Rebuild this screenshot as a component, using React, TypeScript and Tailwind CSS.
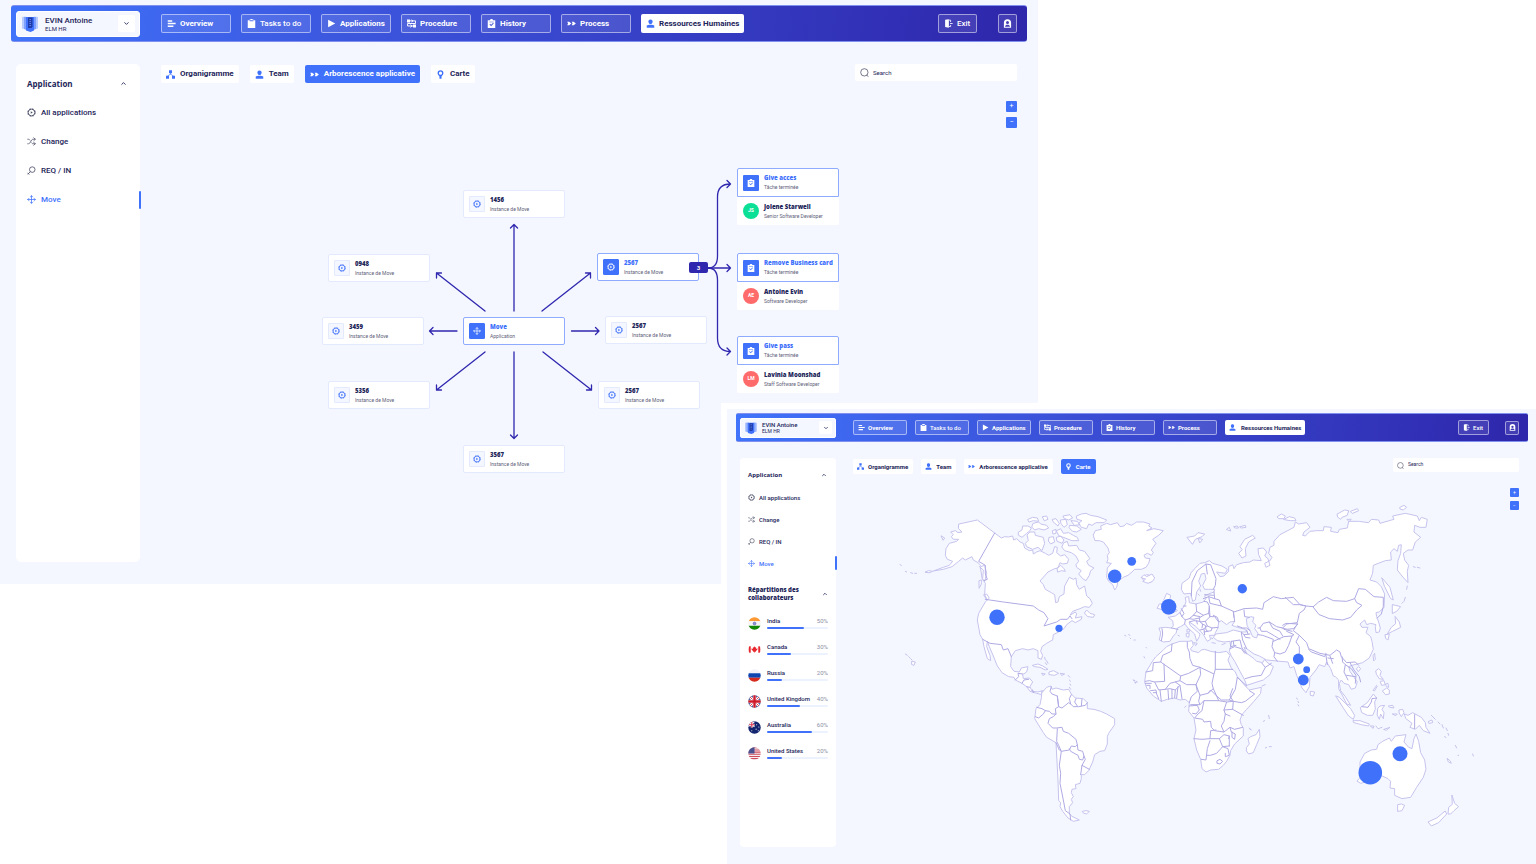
import React from 'react';
import clsx from 'clsx';
import { ChevronDown, ChevronUp, Move, Shuffle } from 'lucide-react';

type Size = 'lg' | 'sm';

type IconProps = { className?: string };

/* ---------- sizes ---------- */

const sizes = {
  lg: {
    panel: 'pt-[5px] px-[11px] pb-[22px]',
    bar: 'h-[37px] pl-[5px] pr-[10px] rounded-[3px]',
    profile: 'w-[124px] h-[26px] pl-[5px] pr-[4px] gap-[7px] rounded-[3px]',
    logo: 'size-4',
    name: 'text-[8px] leading-[9px]',
    role: 'text-[6px] leading-[7px]',
    chevronBox: 'size-[17px]',
    chevron: 'size-[7px]',
    nav: 'ml-[21px] gap-[10px]',
    navItem: 'h-[19px] w-[70px] px-[5px] gap-[4px] text-[8px] rounded-[2px]',
    navActive: 'h-[19px] px-[5px] gap-[4px] text-[8px] rounded-[2px]',
    icon: 'size-[9px]',
    actions: 'gap-[21px]',
    exit: 'h-[19px] w-[39px] px-[5px] gap-[4px] text-[8px] rounded-[2px]',
    account: 'size-[19px] rounded-[2px]',
    body: 'mt-[22px] pl-[5px] pr-[10px] gap-[21px]',
    aside: 'w-[124px] min-h-[498px] pt-[5px] rounded-[5px]',
    heading: 'h-[29px] pl-[11px] pr-[13px] text-[8px]',
    link: 'h-[29px] pl-[11px] gap-[5px] text-[8px]',
    marker: 'h-[18px] w-[2px]',
    head: 'h-[20px]',
    tabs: 'pt-[1px] gap-[11px]',
    tab: 'h-[18px] px-[5px] gap-[5px] text-[8px] rounded-[2px]',
    search: 'h-[17px] w-[162px] pl-[5px] gap-[4px] text-[6px] rounded-[2px]',
    zoom: 'top-[17px] gap-[5px]',
    zoomButton: 'size-[11px] text-[7px]',
  },
  sm: {
    panel: 'pt-[4px] pl-[9px] pr-[8px] pb-[17px]',
    bar: 'h-[29px] pl-[4px] pr-[9px] rounded-[2px]',
    profile: 'w-[96px] h-[20px] pl-[4px] pr-[3px] gap-[5px] rounded-[2px]',
    logo: 'size-[12px]',
    name: 'text-[6px] leading-[7px]',
    role: 'text-[5px] leading-[6px]',
    chevronBox: 'size-[13px]',
    chevron: 'size-[6px]',
    nav: 'ml-[17px] gap-[8px]',
    navItem: 'h-[15px] w-[54px] px-[4px] gap-[3px] text-[6px] rounded-[2px]',
    navActive: 'h-[15px] px-[4px] gap-[5px] text-[6px] rounded-[2px]',
    icon: 'size-[7px]',
    actions: 'gap-[16px]',
    exit: 'h-[15px] w-[31px] px-[4px] gap-[3px] text-[6px] rounded-[2px]',
    account: 'size-[14px] rounded-[2px]',
    body: 'mt-[16px] pl-[4px] pr-[9px] gap-[17px]',
    aside: 'w-[96px] min-h-[389px] pt-[6px] rounded-[4px]',
    heading: 'h-[22px] pl-[8px] pr-[9px] text-[6px]',
    link: 'h-[22px] pl-[8px] gap-[4px] text-[6px]',
    marker: 'h-[14px] w-[2px]',
    head: 'h-[16px]',
    tabs: 'pt-[1px] gap-[8px]',
    tab: 'h-[15px] pl-[4px] pr-[5px] gap-[4px] text-[6px] rounded-[2px]',
    search: 'h-[14px] w-[126px] pl-[4px] gap-[4px] text-[5px] rounded-[2px]',
    zoom: 'top-[14px] gap-[4px]',
    zoomButton: 'size-[9px] text-[5px]',
  },
};

/* ---------- icons ---------- */

const Svg: React.FC<{ className?: string; children: React.ReactNode }> = ({ className, children }) => (
  <svg viewBox="0 0 12 12" className={clsx('shrink-0', className)} fill="currentColor" aria-hidden="true">
    {children}
  </svg>
);

const OverviewIcon = ({ className }: IconProps) => (
  <Svg className={className}>
    <path d="M1 1.500h6v2H1zM1 5h10.500v2H1zM1 8.500h7.500v2H1z" />
  </Svg>
);

const ClipboardIcon = ({ className }: IconProps) => (
  <Svg className={className}>
    <path d="M1 1.500h2.500V.5h1.300V0h2.400v.5h1.300v1H11V12H1zM3.500 1.500V3h5V1.500z" fillRule="evenodd" />
  </Svg>
);

const ClipboardCheckIcon = ({ className }: IconProps) => (
  <Svg className={className}>
    <path
      d="M1 1.500h3C4 .6 5 0 6 0s2 .6 2 1.500h3V12H1zM3 3.500v.8h6v-.8zM3.300 7.300l2.200 2.200L9 6l-.9-.9-2.600 2.600-1.300-1.300z"
      fillRule="evenodd"
    />
  </Svg>
);

const PlayIcon = ({ className }: IconProps) => (
  <Svg className={className}>
    <path d="M1.500 1l9.500 5-9.500 5z" />
  </Svg>
);

const ProcedureIcon = ({ className }: IconProps) => (
  <Svg className={className}>
    <path d="M0 .8h4v4H0zM8 7.200h4v4H8z" />
    <path d="M4 2.500h7.400v3.500H.8v3.300H8M6 1l2 1.500-2 1.500M4.500 7.500l2.200 1.800-2.200 1.700" fill="none" stroke="currentColor" strokeWidth="1.300" />
  </Svg>
);

const ForwardIcon = ({ className }: IconProps) => (
  <Svg className={className}>
    <path d="M.3 3.700h2.600L5.800 6 2.900 8.300H.3L1.400 6zM6.300 3.700h2.600L11.800 6 8.900 8.300H6.300L7.400 6z" />
  </Svg>
);

const UserIcon = ({ className }: IconProps) => (
  <Svg className={className}>
    <path d="M6 .5c1.700 0 2.800 1.100 2.800 2.800S7.700 6.800 6 6.800 3.200 5 3.200 3.300 4.300.5 6 .5z" />
    <path d="M1 8.800c1-1 2.500-1.300 5-1.300s4 .3 5 1.300v2.700H1z" />
  </Svg>
);

const OrgIcon = ({ className }: IconProps) => (
  <Svg className={className}>
    <path d="M4 .3h4v4H4zM0 7.700h4v4H0zM8 7.700h4v4H8z" />
    <path d="M6 4v1.800M2 8l4-2.500L10 8" fill="none" stroke="currentColor" strokeWidth=".9" />
  </Svg>
);

const PinIcon = ({ className }: IconProps) => (
  <Svg className={className}>
    <path
      d="M6 .3a3.900 3.900 0 0 1 3.900 4c0 2-1.700 3-2.500 4.500V11.700H4.600V8.800C3.800 7.300 2.100 6.300 2.100 4.300A3.900 3.900 0 0 1 6 .3zm0 1.800a2.100 2.100 0 1 0 0 4.200 2.100 2.100 0 0 0 0-4.200z"
      fillRule="evenodd"
    />
  </Svg>
);

const ExitIcon = ({ className }: IconProps) => (
  <Svg className={className}>
    <path d="M1.500 1L6.500.2v11.600l-5-1.300z" />
    <path d="M6.500 1.500h2.300v2.500M6.500 10h2.300V8M8 6h3.500" fill="none" stroke="currentColor" strokeWidth="1.100" />
  </Svg>
);

const AccountIcon = ({ className }: IconProps) => (
  <Svg className={className}>
    <path
      d="M1.200 5a4.800 4.800 0 0 1 9.600 0v6.500H1.200zM6 2.800a2 2 0 1 0 0 4 2 2 0 0 0 0-4zM2.600 10.400h6.800C9 8.600 7.600 7.800 6 7.800s-3 .8-3.400 2.600z"
      fillRule="evenodd"
    />
  </Svg>
);

const AppsIcon = ({ className }: IconProps) => (
  <Svg className={className}>
    <circle cx="6" cy="6" r="4.400" fill="none" stroke="currentColor" strokeWidth="1.200" />
    <circle cx="6" cy="6" r="5.100" fill="none" stroke="currentColor" strokeWidth="1" strokeDasharray="2.500 1.505" />
    <path d="M5 4.200L7.700 6 5 7.800z" />
  </Svg>
);

const RequestIcon = ({ className }: IconProps) => (
  <Svg className={className}>
    <circle cx="7" cy="4.800" r="3.700" fill="none" stroke="currentColor" strokeWidth="1.100" />
    <path d="M4.500 7.500L1 11M.5 9l2.500 2.500" fill="none" stroke="currentColor" strokeWidth="1.100" />
  </Svg>
);

const LensIcon = ({ className }: IconProps) => (
  <Svg className={className}>
    <circle cx="5.800" cy="5.800" r="4.900" fill="none" stroke="currentColor" strokeWidth="1" />
    <path d="M8.800 9.600l2.500 1.800" fill="none" stroke="currentColor" strokeWidth="1" />
  </Svg>
);

const Logo = ({ className }: IconProps) => (
  <svg viewBox="0 0 16 16" className={clsx('shrink-0', className)} aria-hidden="true">
    <path d="M0 1l4-.5v13L0 12.500zM16 1l-4-.5v13l4-1z" fill="#b7cbff" />
    <path d="M2 1h3v13l-3-1zM14 1h-3v13l3-1z" fill="#7ea0ff" />
    <path d="M4 1h8v13.500L8.500 16 4 14.500z" fill="#3f71fb" />
    <path d="M6 1.500h4.500v9L9.500 12H6z" fill="#1d3aa8" />
    <path d="M7.500 3h1.300v1H7.500zM7.500 5h1.300v1H7.500zM7.500 7h1.300v1H7.500zM7.500 9h1.300v1H7.500z" fill="#6f92f5" />
  </svg>
);

/* ---------- shell ---------- */

const navItems = [
  { label: 'Overview', icon: OverviewIcon },
  { label: 'Tasks to do', icon: ClipboardIcon },
  { label: 'Applications', icon: PlayIcon },
  { label: 'Procedure', icon: ProcedureIcon },
  { label: 'History', icon: ClipboardCheckIcon },
  { label: 'Process', icon: ForwardIcon },
];

const sideLinks = [
  { label: 'All applications', icon: AppsIcon },
  { label: 'Change', icon: Shuffle },
  { label: 'REQ / IN', icon: RequestIcon },
  { label: 'Move', icon: Move },
];

const tabs = [
  { label: 'Organigramme', icon: OrgIcon },
  { label: 'Team', icon: UserIcon },
  { label: 'Arborescence applicative', icon: ForwardIcon },
  { label: 'Carte', icon: PinIcon },
];

const TopBar: React.FC<{ size: Size }> = ({ size }) => {
  const s = sizes[size];
  return (
    <header className={clsx('flex items-center border-y border-[#7f90ee] bg-[linear-gradient(97deg,#4073fb,#3a4fd6_42%,#2e26ab)] text-white', s.bar)}>
      <button className={clsx('flex items-center border border-white bg-[#f4f7ff] text-left text-[#1d2559]', s.profile)}>
        <Logo className={s.logo} />
        <span className="flex-1">
          <span className={clsx('block font-medium', s.name)}>EVIN Antoine</span>
          <span className={clsx('block', s.role)}>ELM HR</span>
        </span>
        <span className={clsx('flex items-center justify-center rounded-[2px] bg-white', s.chevronBox)}>
          <ChevronDown className={s.chevron} strokeWidth={3} />
        </span>
      </button>
      <nav className={clsx('flex flex-1 items-center', s.nav)}>
        {navItems.map(({ label, icon: Icon }) => (
          <button
            key={label}
            className={clsx(
              'flex items-center whitespace-nowrap border border-white/50 bg-white/10',
              label === 'Tasks to do' ? 'font-medium' : 'font-bold',
              s.navItem,
            )}
          >
            <Icon className={s.icon} />
            {label}
          </button>
        ))}
        <button className={clsx('flex items-center whitespace-nowrap bg-white font-bold text-[#1d2559]', s.navActive)}>
          <UserIcon className={clsx('text-[#3f71fb]', s.icon)} />
          Ressources Humaines
        </button>
      </nav>
      <div className={clsx('flex items-center', s.actions)}>
        <button className={clsx('flex items-center border border-white/50 bg-white/10 font-medium', s.exit)}>
          <ExitIcon className={s.icon} />
          Exit
        </button>
        <button aria-label="Account" className={clsx('flex items-center justify-center border border-white/50 bg-white/10', s.account)}>
          <AccountIcon className={s.icon} />
        </button>
      </div>
    </header>
  );
};

const Sidebar: React.FC<{ size: Size; children?: React.ReactNode }> = ({ size, children }) => {
  const s = sizes[size];
  return (
    <aside className={clsx('shrink-0 bg-white text-[#1d2559]', s.aside)}>
      <h2 className={clsx("flex items-center justify-between font-['Open_Sans',sans-serif] font-bold", s.heading)}>
        Application
        <ChevronUp className={s.chevron} strokeWidth={3} />
      </h2>
      {sideLinks.map(({ label, icon: Icon }) => {
        const active = label === 'Move';
        return (
          <a
            key={label}
            href="#"
            className={clsx('relative flex items-center font-medium', active ? 'text-[#3f71fb]' : 'text-[#1d2559]', s.link)}
          >
            <Icon className={clsx('shrink-0', !active && 'text-[#4b4f68]', s.icon)} />
            {label}
            {active && <span className={clsx('absolute -right-px rounded-full bg-[#3f71fb]', s.marker)} />}
          </a>
        );
      })}
      {children}
    </aside>
  );
};

interface ScreenProps {
  size: Size;
  tab: string;
  side?: React.ReactNode;
  children: React.ReactNode;
}

const Screen: React.FC<ScreenProps> = ({ size, tab, side, children }) => {
  const s = sizes[size];
  return (
    <section className={clsx('bg-[#f4f7ff]', s.panel)}>
      <TopBar size={size} />
      <div className={clsx('flex', s.body)}>
        <Sidebar size={size}>{side}</Sidebar>
        <main className="min-w-0 flex-1">
          <div className={clsx('flex items-start justify-between', s.head)}>
            <div className={clsx('flex', s.tabs)}>
              {tabs.map(({ label, icon: Icon }) => {
                const active = label === tab;
                return (
                  <button
                    key={label}
                    className={clsx(
                      'flex items-center whitespace-nowrap font-bold',
                      active ? 'bg-[#3f71fb] text-white' : 'bg-white text-[#1d2559]',
                      s.tab,
                    )}
                  >
                    <Icon className={clsx(!active && 'text-[#3f71fb]', s.icon)} />
                    {label}
                  </button>
                );
              })}
            </div>
            <label className={clsx('flex items-center bg-white text-[#4b4f68]', s.search)}>
              <LensIcon className={s.icon} />
              <input
                type="search"
                aria-label="Search"
                placeholder="Search"
                className="min-w-0 flex-1 bg-transparent outline-none placeholder:text-[#1d2559]"
              />
            </label>
          </div>
          <div className="relative">
            {children}
            <div className={clsx('absolute right-0 flex flex-col', s.zoom)}>
              <button aria-label="Zoom in" className={clsx('flex items-center justify-center rounded-[1px] bg-[#3f71fb] text-white', s.zoomButton)}>
                +
              </button>
              <button aria-label="Zoom out" className={clsx('flex items-center justify-center rounded-[1px] bg-[#3f71fb] text-white', s.zoomButton)}>
                −
              </button>
            </div>
          </div>
        </main>
      </div>
    </section>
  );
};

/* ---------- application tree ---------- */

const nodes = [
  { x: 302, y: 106, title: '1456', sub: 'Instance de Move' },
  { x: 167, y: 170, title: '0948', sub: 'Instance de Move' },
  { x: 161, y: 233, title: '3459', sub: 'Instance de Move' },
  { x: 167, y: 297, title: '5356', sub: 'Instance de Move' },
  { x: 302, y: 361, title: '3567', sub: 'Instance de Move' },
  { x: 302, y: 233, title: 'Move', sub: 'Application', active: true, icon: Move },
  { x: 436, y: 169, title: '2567', sub: 'Instance de Move', active: true },
  { x: 444, y: 232, title: '2567', sub: 'Instance de Move' },
  { x: 437, y: 297, title: '2567', sub: 'Instance de Move' },
];

const tasks = [
  { y: 84, title: 'Give acces', initials: 'JS', color: 'bg-[#0be096]', name: 'Jolene Starwell', job: 'Senior Software Developer' },
  { y: 169, title: 'Remove Business card', initials: 'AE', color: 'bg-[#ff6b6b]', name: 'Antoine Evin', job: 'Software Developer' },
  { y: 252, title: 'Give pass', initials: 'LM', color: 'bg-[#ff6b6b]', name: 'Lavinia Moonshad', job: 'Staff Software Developer' },
];

const CardText: React.FC<{ title: string; sub: string; active?: boolean }> = ({ title, sub, active }) => (
  <span className="whitespace-nowrap">
    <span
      className={clsx(
        "block font-['Open_Sans',sans-serif] text-[6px] leading-[10px] font-extrabold",
        active ? 'text-[#3f71fb]' : 'text-[#1d2559]',
      )}
    >
      {title}
    </span>
    <span className="block text-[5px] leading-[9px] text-[#5d6078]">{sub}</span>
  </span>
);

const Tree = () => (
  <div className="relative h-[478px]">
    <svg className="absolute top-0 left-0" width="856" height="478" fill="none" stroke="#2f27ae" strokeWidth="1.300" strokeLinecap="round" strokeLinejoin="round" aria-hidden="true">
      <path d="M353 227V141M349.500 144l3.500-3.500 3.500 3.500" />
      <path d="M353 268v86M349.500 351l3.500 3.500 3.500-3.500" />
      <path d="M324 227l-48.500-38M275.500 194v-5h5" />
      <path d="M381 227l48.500-38M424.500 189h5v5" />
      <path d="M296 247h-27M272 243.500l-3.500 3.500 3.500 3.500" />
      <path d="M410.500 247h27M434.500 243.500l3.500 3.500-3.500 3.500" />
      <path d="M324 268l-48.500 38M275.500 301v5h5" />
      <path d="M382 268l48.500 38M425.500 306h5v-5" />
      <path d="M547 184h22.500M566 180.500l3.500 3.500-3.500 3.500" />
      <path d="M547 184q9.500 0 9.500-12v-59q0-13 13-13M566 96.500l3.500 3.500-3.500 3.500" />
      <path d="M547 184q9.500 0 9.500 12v58q0 13.500 13 13.500M566 264l3.500 3.500-3.500 3.500" />
    </svg>
    {nodes.map(({ x, y, title, sub, active, icon }) => {
      const Icon = icon ?? AppsIcon;
      return (
        <div
          key={x + '-' + y}
          style={{ left: x, top: y }}
          className={clsx(
            'absolute flex h-[28px] w-[102px] items-center gap-[5px] rounded-[2px] border bg-white pl-[5px]',
            active ? 'border-[#8fabff]' : 'border-[#e3eafd]',
          )}
        >
          <span
            className={clsx(
              'flex size-[16px] items-center justify-center rounded-[1px] border',
              active ? 'border-[#3f71fb] bg-[#3f71fb] text-white' : 'border-[#e3eafd] bg-[#f4f7ff] text-[#3f71fb]',
            )}
          >
            <Icon className="size-[8px]" />
          </span>
          <CardText title={title} sub={sub} active={active} />
        </div>
      );
    })}
    <span className="absolute top-[178px] left-[528px] flex h-[11px] w-[19px] items-center justify-center rounded-[2px] bg-[#2f27ae] text-[6px] font-bold text-white">
      3
    </span>
    {tasks.map((task) => (
      <div key={task.title} style={{ top: task.y }} className="absolute left-[576px] w-[102px] rounded-[2px] bg-white">
        <div className="flex h-[29px] items-center gap-[5px] rounded-t-[2px] border border-[#8fabff] pl-[5px]">
          <span className="flex size-[16px] shrink-0 items-center justify-center rounded-[1px] bg-[#3f71fb] text-white">
            <ClipboardCheckIcon className="size-[8px]" />
          </span>
          <CardText title={task.title} sub="Tâche terminée" active />
        </div>
        <div className="flex h-[28px] items-center gap-[5px] pl-[6px]">
          <span className={clsx('flex size-[16px] items-center justify-center rounded-full text-[5px] font-bold text-white', task.color)}>
            {task.initials}
          </span>
          <CardText title={task.name} sub={task.job} />
        </div>
      </div>
    ))}
  </div>
);

/* ---------- flags ---------- */

const stars = [[16, 7], [20, 11], [15, 15], [19, 18], [7, 18]];

const flags: Record<string, React.ReactNode> = {
  India: (
    <>
      <path d="M0 0h24v8H0z" fill="#ff9933" />
      <path d="M0 8h24v8H0z" fill="#f4f4f8" />
      <path d="M0 16h24v8H0z" fill="#138808" />
      <circle cx="12" cy="12" r="2.500" fill="#8f92d6" stroke="#4448a8" strokeWidth="1" />
    </>
  ),
  Canada: (
    <>
      <path d="M0 0h24v24H0z" fill="#fff" />
      <path d="M1 6h4v12H1zM19 6h4v12h-4z" fill="#e8262d" />
      <path d="M12 6l1.500 2.500 1.500-.5-.3 3 2.300-1.500.8 2-3.300 3.500.2 1h-2.200V18h-1v-2H9.300l.2-1L6.200 11.500l.8-2L9.300 11 9 8l1.500.5z" fill="#e8262d" />
    </>
  ),
  Russia: (
    <>
      <path d="M0 0h24v8H0z" fill="#f1f2f7" />
      <path d="M0 8h24v8H0z" fill="#0c45b0" />
      <path d="M0 16h24v8H0z" fill="#d52b1e" />
    </>
  ),
  'United Kingdom': (
    <>
      <path d="M0 0h24v24H0z" fill="#1b2a78" />
      <path d="M0 0l24 24M24 0L0 24" stroke="#fff" strokeWidth="5" />
      <path d="M0 0l24 24M24 0L0 24" stroke="#cf1b2b" strokeWidth="1.500" />
      <path d="M12 0v24M0 12h24" stroke="#fff" strokeWidth="6.500" />
      <path d="M12 0v24M0 12h24" stroke="#cf1b2b" strokeWidth="4.500" />
    </>
  ),
  Australia: (
    <>
      <path d="M0 0h24v24H0z" fill="#12256e" />
      <path d="M0 1l12 10M12 1L0 11" stroke="#fff" strokeWidth="2" />
      <path d="M7 0v12M0 7h12" stroke="#fff" strokeWidth="4" />
      <path d="M7 0v12M0 7h12" stroke="#d8324b" strokeWidth="2" />
      {stars.map(([x, y]) => (
        <circle key={x} cx={x} cy={y} r="1" fill="#fff" />
      ))}
    </>
  ),
  'United States': (
    <>
      <path d="M0 0h24v24H0z" fill="#f6eef2" />
      <path d="M0 1.500h24M0 5.500h24M0 9.500h24M0 13.500h24M0 17.500h24M0 21.500h24" stroke="#cf4c5c" strokeWidth="2" />
      <path d="M0 0h12v12H0z" fill="#4a5190" />
    </>
  ),
};

const Flag: React.FC<{ country: string }> = ({ country }) => {
  const id = 'flag-' + country.toLowerCase().replace(' ', '-');
  return (
    <svg viewBox="0 0 24 24" className="size-[13px] shrink-0" role="img" aria-label={country}>
      <clipPath id={id}>
        <circle cx="12" cy="12" r="11.500" />
      </clipPath>
      <g clipPath={'url(#' + id + ')'}>{flags[country]}</g>
    </svg>
  );
};

const shares = [
  { country: 'India', label: '50%', fill: 60 },
  { country: 'Canada', label: '30%', fill: 40 },
  { country: 'Russia', label: '20%', fill: 24 },
  { country: 'United Kingdom', label: '40%', fill: 54 },
  { country: 'Australia', label: '60%', fill: 74 },
  { country: 'United States', label: '20%', fill: 24 },
];

const Shares = () => (
  <div className="mt-3 pr-[8px] pl-[8px]">
    <h2 className="flex items-center justify-between font-['Open_Sans',sans-serif] text-[6px] leading-[8px] font-extrabold">
      <span>
        Répartitions des
        <br />
        collaborateurs
      </span>
      <ChevronUp className="size-[6px]" strokeWidth={3} />
    </h2>
    <ul className="mt-[8px]">
      {shares.map(({ country, label, fill }) => (
        <li key={country} className="flex h-[26px] items-center gap-[6px]">
          <Flag country={country} />
          <div className="flex-1">
            <div className="flex justify-between text-[6px] leading-[8px] whitespace-nowrap">
              <span className="font-medium">{country}</span>
              <span className="text-[#8c8fa6]">{label}</span>
            </div>
            <div className="mt-[2px] h-[2px] rounded-full bg-[#edf2ff]">
              <div className="h-full rounded-full bg-[#3f71fb]" style={{ width: fill + '%' }} />
            </div>
          </div>
        </li>
      ))}
    </ul>
  </div>
);

/* ---------- world map ---------- */

// every region is drawn on its own origin, three units to a pixel
const regions = [
  {
    name: 'north-america',
    at: 'translate(37 26) scale(.3333)',
    coast: [
      'M207 72L262 60L314 99L326 108L334 114L344 110L356 111L368 108L371 120L380 116L390 126L400 130L404 144L418 152L428 150L430 162L440 156L450 152L466 160L476 166L488 160L494 140L502 142L500 158L512 168L524 164L536 178L532 190L518 192L510 188L504 204L494 206L474 216L450 243L460 254L466 268L484 278L494 284L497 308L504 306L508 290L522 282L524 258L538 232L550 238L558 234L560 254L568 268L584 258L590 288L600 296L607 310L598 322L584 320L570 326L548 334L540 346L556 336L560 342L556 354L576 350L574 358L556 368L546 362L530 374L522 386L506 396L490 404L488 420L470 430L456 440L452 454L458 466L454 478L444 474L444 452L430 446L414 450L398 446L376 452L364 470L362 500L372 514L388 516L394 504L414 500L410 516L398 524L400 536L418 534L428 546L420 560L426 574L444 576L458 572L470 576L456 584L440 580L420 574L410 560L396 550L376 540L372 532L356 530L336 518L322 498L310 468L298 440L292 424L290 440L300 466L302 482L292 476L282 440L278 418L270 404L262 360L266 340L286 306L292 300L284 284L286 250L278 236L280 210L268 200L272 196L264 188L250 180L246 170L226 180L218 174L206 184L186 200L160 208L130 213L160 202L178 196L188 184L172 178L166 166L168 146L178 130L200 124L206 118L190 118L184 110L190 104L182 96L196 92L204 98L216 96L206 86Z',
      'M522 128L532 124L536 138L560 136L568 150L584 154L600 176L590 184L596 196L612 204L602 212L598 226L588 242L578 236L566 222L574 212L560 202L558 194L566 184L558 168L544 158L524 152L516 142Z',
      'M412 104L420 96L434 96L436 106L460 112L464 130L456 152L444 142L428 148L410 140L406 130L414 122Z',
      'M386 96L396 90L398 78L414 78L424 84L420 92L410 100L396 112L386 106Z',
      'M430 70L446 66L452 72L470 76L476 84L462 90L446 86L434 90L426 82Z',
      'M414 58L428 52L442 54L446 64L430 62L418 66Z',
      'M458 50L470 48L474 58L464 62Z',
      'M478 112L490 110L494 126L482 132L476 124Z',
      'M500 92L512 86L520 100L536 98L550 106L562 112L566 122L546 122L520 112L508 108Z',
      'M500 112L512 108L522 120L516 130L502 124Z',
      'M488 58L498 56L508 70L504 78L490 66Z',
      'M512 60L528 58L532 74L522 82L514 72Z',
      'M488 92L498 88L498 100L490 102Z',
      'M520 48L540 44L548 54L536 60L524 56Z',
      'M540 76L560 78L574 88L560 96L548 94L538 84Z',
      'M544 62L562 64L570 74L554 76Z',
      'M560 48L574 42L588 40L602 46L624 50L650 60L642 68L618 68L606 76L596 72L590 86L574 82L566 70L576 62L562 58Z',
      'M502 204L512 196L522 206L526 214L514 212L504 216Z',
      'M584 338L590 330L600 340L614 344L610 352L594 350Z',
      'M282 284L290 282L298 294L292 300Z',
      'M268 242L274 240L274 252L268 264Z',
      'M272 200L284 196L290 220L284 244L278 240Z',
      'M154 108L164 114L160 120Z',
      'M106 216L116 212L128 214L118 218Z',
      'M66 484L76 486L72 496L66 494Z',
      'M46 462L52 466M56 470L60 474M62 476L66 480M30 194L34 196M46 214L50 216M62 218L68 220M74 220L80 220',
      'M428 496L444 492L458 498L474 508L466 510L450 502L434 500Z',
      'M478 516L490 512L506 520L494 526L478 524Z',
      'M456 520L466 522L460 526Z',
      'M512 520L524 522L516 526Z',
      'M464 472L466 480M470 482L474 490M466 488L470 494M534 526L540 532M538 540L542 544M540 552L542 556M538 562L542 568',
      'M704 406L708 408M716 404L720 406M720 414L722 416M732 420L736 420M768 442L770 444M762 470L764 474M730 540L734 544M736 548L740 546',
      'M756 232L770 224L790 228L784 246L764 244Z',
    ],
    borders: [
      'M314 99L266 184L286 196L286 222L292 238L282 242',
      'M286 298L340 306L430 318L446 330L462 338L474 356L462 378L500 366L512 358L532 358L540 348L546 356',
      'M278 418L300 430L334 434L340 450L354 446L364 470',
      'M376 540L386 530L384 520L398 522M396 550L402 540L416 538M410 560L418 562M430 578L428 570M456 600L456 574',
    ],
  },
  {
    name: 'greenland',
    at: 'translate(247 26) scale(.3333)',
    coast: [
      'M-20 104L-14 92L4 88L2 78L20 70L32 74L52 68L60 80L72 78L80 70L94 76L104 70L110 66L130 66L150 72L146 78L156 84L140 92L162 86L190 92L176 106L158 118L168 130L154 150L160 158L154 166L142 160L132 166L136 174L150 176L146 190L138 202L124 208L104 208L96 216L84 226L70 232L54 244L50 262L44 270L38 254L26 244L20 232L22 204L34 190L20 188L24 178L22 166L28 158L24 144L10 126L-2 122L-14 122Z',
      'M124 232L132 224L140 230L156 222L164 234L158 244L144 250L128 244L136 238Z',
    ],
    borders: [],
  },
  {
    name: 'south-america',
    at: 'translate(147 166) scale(.3333)',
    coast: [
      'M126 158L140 142L152 138L156 148L168 144L190 150L206 148L214 162L226 174L250 176L262 188L262 206L282 208L302 214L320 222L344 236L344 254L326 280L322 290L322 312L314 332L300 334L284 344L278 366L266 392L254 404L244 404L244 416L240 430L226 434L228 446L216 448L214 458L220 470L214 478L218 488L208 500L208 520L214 528L238 540L220 544L204 534L188 514L180 500L182 488L176 482L174 420L168 308L140 292L130 278L104 236L108 206L120 194L124 174Z',
      'M248 514L258 512L268 514L260 522L252 520Z',
    ],
    borders: [
      'M154 140L150 154L156 162L172 168L176 200L166 206L168 222L160 230L148 236L144 250L158 264L170 264L186 262L190 274L206 280L228 298L232 314L226 320L214 318L208 330L184 334L176 316L170 304L172 266',
      'M110 202L126 206L136 212L130 222L116 234L106 230M136 212L148 214L156 222L168 222',
      'M172 168L176 200L186 204L196 196L206 188L212 192L208 176L214 164M212 192L220 200L236 200L256 196L262 188M228 176L224 186L232 198M246 178L244 198',
      'M232 314L234 330L248 334L252 348L248 360L238 358L234 346L212 334L208 326M252 348L256 358L246 376L268 388M246 376L242 404',
      'M168 308L178 330L184 334L178 376L182 400L180 430L190 480L196 512L210 522L212 540',
    ],
  },
  {
    name: 'eurasia',
    at: 'translate(247 26) scale(.3333)',
    coast: [
      'M178 384L196 382L214 384L220 378L218 362L204 352L216 350L226 348L240 338L246 328L254 316L258 306L256 292L266 290L268 308L288 312L310 306L318 296L314 288L326 282L342 276L344 268L326 268L314 268L308 256L318 236L314 220L304 222L296 244L302 258L290 276L286 300L278 304L272 280L252 282L244 268L246 250L268 234L272 220L284 206L300 190L314 188L328 182L338 190L366 198L382 208L376 220L350 216L360 230L372 228L386 214L386 200L398 194L402 206L410 194L430 188L450 186L460 180L484 182L476 164L474 146L490 144L500 156L494 168L504 176L510 196L498 202L494 190L510 182L516 172L506 160L510 142L522 136L522 124L540 104L582 82L586 66L596 72L620 68L630 82L612 96L608 106L616 108L630 94L650 92L670 92L672 80L694 82L692 94L714 98L718 88L742 84L746 64L776 64L806 68L814 58L836 60L840 70L882 58L878 48L916 40L952 48L958 62L964 52L982 58L978 82L960 82L944 76L942 96L962 112L946 126L938 150L924 150L910 160L914 180L926 196L922 214L924 248L906 228L892 210L894 182L902 160L904 134L896 136L892 154L882 146L872 156L874 180L856 182L820 196L818 220L810 240L830 246L844 260L854 282L852 322L838 336L828 338L830 350L836 366L841 384L838 396L828 398L826 380L828 374L812 370L800 374L794 360L780 372L786 382L804 382L798 398L812 410L816 424L820 448L808 474L788 488L756 496L746 500L750 514L762 532L772 546L766 564L754 568L746 554L732 550L724 540L718 550L722 572L736 590L752 616L740 612L728 588L716 566L716 540L706 530L700 528L692 506L680 486L674 500L658 494L648 510L630 532L628 560L618 578L606 564L590 526L582 500L570 504L564 486L540 484L500 480L478 468L462 462L440 446L432 442L440 460L462 476L470 484L488 488L494 478L500 486L520 500L510 524L490 540L440 556L434 540L420 514L404 484L394 468L388 454L392 440L390 424L372 426L352 422L340 412L348 402L380 398L400 390L424 396L440 396L436 388L412 382L396 376L404 364L390 366L380 374L364 362L356 366L354 384L346 398L344 406L328 406L332 418L322 424L310 404L302 394L286 378L268 366L270 376L300 402L298 410L290 424L284 402L266 386L254 372L242 380L232 384L228 400L220 408L210 424L190 426L178 420L182 400Z',
      'M192 298L200 280L212 286L210 296L222 320L232 332L206 344L194 340L200 320Z',
      'M172 324L178 312L188 312L188 328Z',
      'M426 148L420 140L434 118L458 106L466 114L446 126L436 146L438 168L426 174L416 160L422 154Z',
      'M262 112L284 108L294 98L314 102L306 110L286 118L278 132Z',
      'M296 116L308 118L300 128Z',
      'M380 88L388 82L392 92Z',
      'M402 80L412 78L416 84L406 84ZM420 80L436 76L438 82L424 84Z',
      'M532 50L544 42L556 48L552 56L538 56Z',
      'M552 58L568 50L584 54L588 62L572 62Z',
      'M712 42L734 30L746 32L742 46L726 52L722 58L714 52Z',
      'M752 34L772 26L776 32L758 40Z',
      'M742 58L754 58L748 64Z',
      'M900 22L912 16L920 22L910 30L902 28Z',
      'M846 234L870 262L880 300L872 296L854 260Z',
      'M878 314L902 320L890 334L878 340Z',
      'M886 350L898 366L902 382L878 394L862 402L874 382L886 372Z',
      'M856 404L868 402L864 420L858 416Z',
      'M820 466L824 460L826 478L822 482Z',
      'M770 506L776 500L782 506L776 514Z',
      'M906 310L912 304L916 292M920 268L922 258M940 200L946 202M952 202L960 204',
      'M632 574L644 576L640 588L632 586Z',
      'M262 388L268 388L268 396L262 396ZM260 400L268 400L266 412L260 410Z',
      'M282 428L292 430L288 436Z',
      'M336 428L346 430M366 434L376 430',
      'M234 406L238 408M334 414L338 416',
      'M300 268L302 274M294 282L298 286',
    ],
    borders: [
      'M274 288L276 246L292 212L318 192L322 222M318 192L332 194L348 236L346 256L340 268',
      'M342 276L344 296L358 300L364 318L400 334L402 352',
      'M314 284L340 286M310 296L326 290L344 296M326 290L330 310L364 318',
      'M288 312L290 334L310 346L326 340L328 318L322 306L312 304',
      'M244 326L252 340L246 350L256 360L268 356L280 346L290 334M240 338L246 350M250 318L258 318',
      'M214 384L234 388M186 386L188 402L184 422',
      'M256 360L254 372M268 356L280 358L298 354L310 346M280 346L300 350M268 366L282 362L298 364L308 372L306 384M298 354L300 366L316 364L330 350L326 340',
      'M316 364L322 378L312 386M322 378L336 384L354 382M330 350L344 350L356 366M336 384L334 392L312 396M312 386L314 404M340 346L352 352L356 364',
      'M328 320L330 350M306 372L316 376L318 390L324 394M290 362L292 372M300 390L310 388',
      'M402 336L432 326L470 324L488 328L492 308L520 290L544 296L580 292L600 314L618 318L612 330L598 340L592 368L560 372L548 384L530 380L508 366L490 370L480 384L474 384',
      'M432 330L434 350L448 352M400 334L404 364',
      'M412 378L428 384L440 384L450 392M424 396L432 404L450 402M432 404L436 412L450 414M440 390L444 402',
      'M474 404L488 406L520 418L516 440L524 458L522 470L532 484M424 398L428 420L440 446',
      'M520 424L552 410L576 408L566 436L556 456L540 462L524 458',
      'M480 384L484 394L500 394L524 408L540 418M508 366L518 384L540 394L548 408M552 388L576 394',
      'M548 376L558 370L594 372L580 386L562 388L546 384M560 394L582 404L576 408',
      'M394 424L420 420L426 444L440 462M390 446L404 440L424 446L434 460M394 424L392 440L408 436M400 424L402 438',
      'M436 536L456 530L484 526L496 502L514 490M496 502L486 490',
      'M640 320L656 306L680 292L700 302L740 304L764 296L770 308L786 316L770 330L752 352L728 360L688 356L658 344Z',
      'M764 296L776 266L796 268L822 290L850 292L850 320L844 342L832 354',
      'M556 292L580 314L600 314L618 318L640 320',
      'M598 406L620 428L626 446L660 460L690 466L710 450L720 456L724 470L740 488L766 486L776 496',
      'M592 372L580 392L598 406L588 426L598 440L598 464L584 486',
      'M626 448L634 456L674 470L678 460M678 466L682 494M690 468L698 490M684 474L700 476',
      'M726 470L728 486L736 494L732 516L744 540M736 494L754 506L768 526L766 550M750 488L762 510L778 530L782 546M740 526L766 530',
    ],
  },
  {
    name: 'africa',
    at: 'translate(147 166) scale(.3333)',
    coast: [
      'M490 30L500 20L516 12L540 4L566 4L576 2L580 16L572 26L574 32L596 38L604 30L614 28L632 34L656 38L680 34L690 46L684 60L694 84L706 96L712 110L724 124L736 138L748 150L784 142L782 160L762 184L740 208L726 224L720 240L724 254L730 264L730 288L704 312L692 332L690 346L680 364L670 376L656 388L632 390L618 396L606 386L602 358L590 330L582 296L588 270L582 234L566 214L568 188L556 178L540 180L524 174L502 178L484 184L460 168L440 144L434 126L438 96L456 66L466 52Z',
      'M740 322L748 312L744 296L752 290L768 284L778 268L780 290L770 314L760 338L746 342L740 334Z',
      'M400 120L404 122M404 128L406 130M408 124L412 126M554 202L558 198M748 264L752 268',
    ],
    borders: [
      'M516 12L514 34L488 46L482 66L460 68L458 92L438 96',
      'M482 66L542 108L566 100L600 82L578 76L570 56L568 36L562 22L562 6',
      'M492 72L494 124L464 126L448 122L436 124M542 108L540 122L510 130L496 148L476 150L464 126',
      'M600 82L642 102L646 88L698 88M646 34L646 88M600 82L602 104L588 134L560 134L540 122',
      'M642 102L636 130L640 146L624 160L600 166L594 150L588 134M640 146L650 168L664 180L688 180L706 148L712 112',
      'M588 134L592 154L574 170L568 188M600 166L596 184L600 194L572 194M624 160L632 150L650 168L656 182L612 182L600 194',
      'M496 148L510 146L526 150L540 136L526 126M526 150L524 174M504 150L506 178M480 150L484 184M534 140L530 174M540 136L546 176M516 148L516 176',
      'M440 136L450 136L450 146M452 152L468 150L470 162L476 176M460 158L470 158M436 130L454 130',
      'M612 182L606 212L594 222L584 234L608 238L612 246L632 244L634 262L644 272L672 276L664 258L672 244L676 222L672 210L680 186L656 182M568 198L592 196L598 210L588 222L578 220',
      'M712 112L740 138M688 180L700 184L724 188L736 184L764 162L748 152M698 146L690 168L700 184L698 208L730 226M698 184L680 186M672 210L698 208M676 222L690 228',
      'M582 296L606 298L630 296L632 272L648 270M630 296L658 296L672 284L688 288L686 296M630 302L622 326L618 360L604 358M658 296L668 320L688 318M668 320L650 340L632 346L620 346M668 320L684 326L688 346L676 350L676 340',
      'M672 276L690 262L704 268L728 262M690 262L694 276L706 282L704 298L696 292L696 276M688 288L688 318M652 362L660 358L668 364L660 372L652 370Z',
    ],
  },
  {
    name: 'oceania',
    at: 'translate(377 166) scale(.3333)',
    coast: [
      'M390 412L390 366L404 340L424 330L440 328L444 314L458 304L478 294L484 304L496 288L528 284L522 306L536 322L546 326L552 296L558 282L566 304L572 338L584 360L588 388L580 412L560 442L542 472L516 476L494 466L494 446L480 444L482 424L474 416L452 406L428 412L414 424L392 430L382 424Z',
      'M504 494L514 492L524 496L516 512L504 514Z',
      'M666 466L674 490L686 500L672 512L662 522L654 522L656 502L666 494Z',
      'M646 514L650 522L626 548L604 558L594 546L620 534Z',
      'M524 222L534 226L548 218L574 232L586 248L588 262L600 280L580 272L568 256L556 268L540 262L546 250L528 236Z',
      'M392 202L412 188L430 162L440 174L434 186L436 208L428 226L412 226L396 218Z',
      'M318 168L328 172L346 190L362 206L374 226L370 238L356 228L340 204Z',
      'M370 242L390 242L418 252L416 258L394 254L372 248Z',
      'M444 204L450 198L464 196L456 208L462 218L460 236L452 222L448 238L442 226Z',
      'M438 92L446 86L454 94L450 106L460 118L448 116L440 104Z',
      'M452 124L462 122L466 134L456 136ZM458 152L470 144L478 150L478 162L468 164Z',
      'M468 132L474 130L476 142L470 140Z',
      'M430 150L440 136L442 138L434 152Z',
      'M508 210L518 208L522 218L514 230L508 220Z',
      'M476 198L488 196L492 204L480 202ZM488 222L502 222L498 226Z',
      'M422 258L432 258L430 264ZM438 258L444 266L456 262M462 268L480 262L470 270Z',
      'M596 244L606 240L608 248L598 250ZM604 226L616 238M624 246L630 252M636 254L640 264M648 264L652 272M654 280L656 286M644 290L648 292',
      'M676 316L680 324M684 346L686 346M728 342L730 348M652 356L660 362L664 370L656 366Z',
      'M200 174L202 178M204 184L206 188M204 194L206 198M116 226L118 236M100 244L104 242M106 324L110 322M118 320L124 320M58 266L64 270M96 138L106 134',
    ],
    borders: ['M554 224V266', 'M396 200L414 202L424 186L426 176L440 174'],
  },
];

// office pins: position and radius in map pixels
const pins = [
  { x: 144, y: 143.300, r: 7.700 },
  { x: 206, y: 154.300, r: 3.600 },
  { x: 261.700, y: 102.300, r: 6.700 },
  { x: 278.700, y: 87.300, r: 4.400 },
  { x: 315.700, y: 132.700, r: 7.700 },
  { x: 389.300, y: 114.700, r: 4.700 },
  { x: 445.300, y: 185, r: 5.400 },
  { x: 453.700, y: 195.700, r: 3.400 },
  { x: 450.300, y: 206, r: 5.400 },
  { x: 517.300, y: 298.700, r: 11.800 },
  { x: 547, y: 279.700, r: 7.500 },
];

const WorldMap = () => (
  <svg viewBox="0 0 666 373" className="block w-full" role="img" aria-label="Carte" strokeLinejoin="round" strokeLinecap="round">
    {regions.map((region) => (
      <g key={region.name} transform={region.at}>
        <path d={region.coast.join('')} fill="#fff" stroke="#c6c3ed" strokeWidth="3" />
        {region.name === 'eurasia' && (
          <path
            d="M440 356L452 350L462 352L458 366L468 376L464 386L474 400L470 414L458 410L450 392L442 378Z"
            fill="#f4f7ff"
            stroke="#c6c3ed"
            strokeWidth="3"
          />
        )}
        <path d={region.borders.join('')} fill="none" stroke="#aeaae3" strokeWidth="3" />
      </g>
    ))}
    {pins.map((pin) => (
      <circle key={pin.x} cx={pin.x} cy={pin.y} r={pin.r} fill="#3f71fb" />
    ))}
  </svg>
);

export default function App() {
  return (
    <div className="min-h-screen bg-white font-[Roboto,sans-serif]">
      <div className="mr-[498px]">
        <Screen size="lg" tab="Arborescence applicative">
          <Tree />
        </Screen>
      </div>
      <div className="relative -mt-[181px] ml-[721px] bg-white pt-[6px] pl-[6px]">
        <Screen size="sm" tab="Carte" side={<Shares />}>
          <WorldMap />
        </Screen>
      </div>
    </div>
  );
}
